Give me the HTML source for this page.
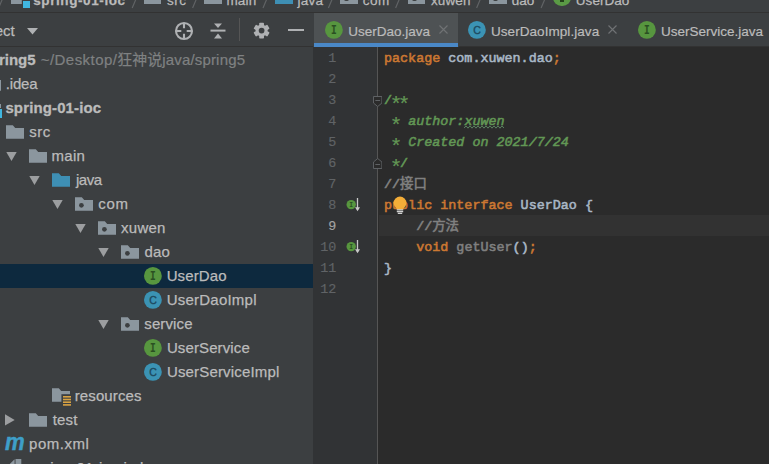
<!DOCTYPE html>
<html><head><meta charset="utf-8"><title>IDE</title>
<style>
html,body{margin:0;padding:0}
body{width:769px;height:464px;overflow:hidden;position:relative;background:#3c3f41;font-family:"Liberation Sans","Noto Sans CJK SC",sans-serif;color:#bbbbbb}
.ic{position:absolute;display:block}
#bc{position:absolute;left:0;top:0;width:769px;height:12px;overflow:hidden;background:#3c3f41}
#bcline{position:absolute;left:0;top:12px;width:769px;height:1px;background:#323232}
.btx{position:absolute;top:-8.2px;font-size:13.5px;line-height:18px;white-space:nowrap;color:#bbbbbb;-webkit-text-stroke:0.25px #bbbbbb}
.btx.b{font-weight:bold}
#left{position:absolute;left:0;top:13px;width:313px;height:451px;background:#3c3f41;overflow:hidden}
#tb{position:absolute;left:0;top:0;width:313px;height:33px}
#tbline{position:absolute;left:0;top:33px;width:313px;height:1px;background:#323232}
.row{position:absolute;left:0;width:313px;height:24px}
.row.sel{background:#0d293e}
.lb{position:absolute;top:0;font-size:15px;line-height:24px;white-space:nowrap;color:#bbbbbb;-webkit-text-stroke:0.25px #bbbbbb}
.lb.b{font-weight:bold;-webkit-text-stroke:0.3px #bbbbbb}
.lb.g{color:#7f8182;-webkit-text-stroke:0.2px #7f8182}
.lb.mvn{font-style:italic;font-weight:bold;font-size:24.6px;color:#3e9fc9;line-height:19px;-webkit-text-stroke:0.5px #3e9fc9;transform:scaleX(0.9);transform-origin:0 0}
#tree{position:absolute;left:0;top:-13px;width:313px;height:464px}
#tabs{position:absolute;left:313px;top:13px;width:456px;height:34px;background:#3c3f41}
.tab{position:absolute;top:0;height:34px}
.tab.act{background:#4e5254}
.tab .ul{position:absolute;left:0;right:0;bottom:0;height:4px;background:#4a88c7}
.tt{position:absolute;top:10.3px;font-size:13.5px;line-height:18px;white-space:nowrap;color:#bbbbbb;-webkit-text-stroke:0.2px #bbbbbb}
#ed{position:absolute;left:313px;top:47px;width:456px;height:417px;background:#2b2b2b}
#gut{position:absolute;left:313px;top:47px;width:65px;height:417px;background:#313335;border-right:1px solid #555555;box-sizing:border-box}
.ln,.cl{position:absolute;font-family:"Liberation Mono","Noto Sans CJK SC",monospace;font-size:13.4px;line-height:21px;height:21px;white-space:pre}
.ln{left:311.8px;width:24.5px;text-align:right;color:#606366;-webkit-text-stroke:0.15px #606366}
.ln.cur{color:#a4a3a3;-webkit-text-stroke:0.15px #a4a3a3}
.cl{left:384px;color:#a9b7c6;-webkit-text-stroke:0.55px}
.k{color:#cc7832} .d{color:#629755} .c{color:#808080} .u{color:#808080}
.as{display:inline-block;font-size:21px;line-height:10px;width:8.04px;text-indent:-2.3px;position:relative;top:6.8px;font-style:normal;-webkit-text-stroke:0.2px}
.cl i{font-style:italic}
.typo{}
#caret{position:absolute;left:379px;top:215px;width:390px;height:21px;background:#323232}
</style></head><body>
<div id="bc"><div class="ic" style="left:11px;top:-9px;width:12px;height:12.7px;background:#8b969e"></div><div class="ic" style="left:22.6px;top:0.6px;width:7.4px;height:7.4px;background:#40b6e0;box-shadow:0 0 0 1.2px #3c3f41"></div><span class="btx b" style="left:33.2px;letter-spacing:0.595px">spring-01-ioc</span><div class="ic" style="left:143.9px;top:-9px;width:17.6px;height:12.7px;background:#8b969e"></div><span class="btx " style="left:166.9px;letter-spacing:0.501px">src</span><div class="ic" style="left:204.3px;top:-9px;width:17.6px;height:12.7px;background:#8b969e"></div><span class="btx " style="left:226.4px;letter-spacing:0.184px">main</span><div class="ic" style="left:275px;top:-9px;width:17.6px;height:12.7px;background:#3e8fb4"></div><span class="btx " style="left:297.5px;letter-spacing:0.208px">java</span><div class="ic" style="left:340px;top:-9px;width:17.6px;height:12.7px;background:#8b969e"></div><div class="ic" style="left:344.2px;top:-3.4px;width:4.6px;height:4.6px;border-radius:50%;background:#3c3f41"></div><span class="btx " style="left:362.8px;letter-spacing:0.432px">com</span><div class="ic" style="left:407.9px;top:-9px;width:17.6px;height:12.7px;background:#8b969e"></div><div class="ic" style="left:412.09999999999997px;top:-3.4px;width:4.6px;height:4.6px;border-radius:50%;background:#3c3f41"></div><span class="btx " style="left:431px;letter-spacing:0.115px">xuwen</span><div class="ic" style="left:489px;top:-9px;width:17.6px;height:12.7px;background:#8b969e"></div><div class="ic" style="left:493.2px;top:-3.4px;width:4.6px;height:4.6px;border-radius:50%;background:#3c3f41"></div><span class="btx " style="left:511.8px;letter-spacing:0.025px">dao</span><div class="ic" style="left:552.9px;top:-11.5px;width:17.7px;height:17.7px;border-radius:50%;background:#5a9a45"></div><div class="ic" style="left:559.6px;top:0;width:4.2px;height:1.5px;background:#23401a"></div><span class="btx " style="left:575.8px;letter-spacing:0.047px">UserDao</span><svg class="ic" style="left:0;top:0" width="769" height="12" viewBox="0 0 769 12"><path d="M3.0 -2.4L-1.4 8 M136.6 -2.4L132.2 8 M197.0 -2.4L192.6 8 M267.4 -2.4L263.0 8 M332.8 -2.4L328.4 8 M400.0 -2.4L395.6 8 M481.0 -2.4L476.6 8 M545.5 -2.4L541.1 8" stroke="#606365" stroke-width="1.2" fill="none"/></svg></div><div id="bcline"></div>
<div id="left">
 <div id="tb">
  <span class="lb" style="left:-32px;top:6.4px">Project</span>
  <svg class="ic" style="left:26.6px;top:15.2px" width="11" height="7" viewBox="0 0 11 7"><path d="M0 0H11L5.5 6.6Z" fill="#afb1b3"/></svg>
  <svg class="ic" style="left:174px;top:7.6px" width="20" height="20" viewBox="0 0 20 20"><circle cx="10" cy="10" r="8" fill="none" stroke="#afb1b3" stroke-width="2.1"/><path d="M10 2V7.3M10 12.7V18M2 10H7.3M12.7 10H18" stroke="#afb1b3" stroke-width="2.1"/></svg>
  <svg class="ic" style="left:210px;top:8.5px" width="16" height="18" viewBox="0 0 16 18"><path d="M0.5 8.6H15.5" stroke="#afb1b3" stroke-width="2"/><path d="M4 1.5H12L8 6Z M4 16.5H12L8 11.5Z" fill="#afb1b3"/></svg>
  <div class="ic" style="left:239px;top:5px;width:1px;height:23px;background:#555555"></div>
  <svg class="ic" style="left:253.4px;top:8.6px" width="17.2" height="17.2" viewBox="-9 -9 18 18"><g fill="#afb1b3"><circle r="6.3"/><g id="t"><rect x="-2.5" y="-8.3" width="5" height="4" rx="0.8"/></g><use href="#t" transform="rotate(60)"/><use href="#t" transform="rotate(120)"/><use href="#t" transform="rotate(180)"/><use href="#t" transform="rotate(240)"/><use href="#t" transform="rotate(300)"/></g><circle r="3" fill="#3c3f41"/></svg>
  <div class="ic" style="left:288.2px;top:15.7px;width:15.7px;height:2.3px;background:#afb1b3"></div>
 </div>
 <div id="tbline"></div>
 <div id="tree"><div class="row" style="top:48px"><span class="lb b" style="left:-18.6px">spring5</span><span class="lb g" style="left:40.8px;letter-spacing:0.438px">~/Desktop/</span><span class="lb g" style="left:117.3px">狂神说</span><span class="lb g" style="left:162.2px;letter-spacing:0.176px">java/spring5</span></div><div class="row" style="top:72px"><svg class="ic" style="left:-17px;top:4.5px" width="18" height="14" viewBox="0 0 18 14"><path d="M0 0.3H6.8L9.2 2.9H18V13.8H0Z" fill="#8b969e"/></svg><span class="lb " style="left:5.8px;letter-spacing:-0.186px">.idea</span></div><div class="row" style="top:96px"><svg class="ic" style="left:-17px;top:4.5px" width="18" height="14" viewBox="0 0 18 14"><path d="M0 0.3H6.8L9.2 2.9H18V13.8H0Z" fill="#8b969e"/></svg><div class="ic" style="left:0;top:12.4px;width:1.9px;height:8.2px;background:#40b6e0;border-top:1.1px solid #3c3f41"></div><span class="lb b" style="left:5.4px;letter-spacing:0.132px">spring-01-ioc</span></div><div class="row" style="top:120px"><svg class="ic" style="left:5.8px;top:4.5px" width="18" height="14" viewBox="0 0 18 14"><path d="M0 0.3H6.8L9.2 2.9H18V13.8H0Z" fill="#8b969e"/></svg><span class="lb " style="left:29.2px;letter-spacing:0.535px">src</span></div><div class="row" style="top:144px"><svg class="ic" style="left:5.5px;top:8px" width="11" height="9" viewBox="0 0 11 9"><path d="M0.3 0H10.7L5.5 9Z" fill="#9c9ea0"/></svg><svg class="ic" style="left:29px;top:4.5px" width="18" height="14" viewBox="0 0 18 14"><path d="M0 0.3H6.8L9.2 2.9H18V13.8H0Z" fill="#8b969e"/></svg><span class="lb " style="left:51.6px;letter-spacing:0.222px">main</span></div><div class="row" style="top:168px"><svg class="ic" style="left:28.5px;top:8px" width="11" height="9" viewBox="0 0 11 9"><path d="M0.3 0H10.7L5.5 9Z" fill="#9c9ea0"/></svg><svg class="ic" style="left:52px;top:4.5px" width="18" height="14" viewBox="0 0 18 14"><path d="M0 0.3H6.8L9.2 2.9H18V13.8H0Z" fill="#3e8fb4"/></svg><span class="lb " style="left:76.0px;letter-spacing:-0.479px">java</span></div><div class="row" style="top:192px"><svg class="ic" style="left:51.5px;top:8px" width="11" height="9" viewBox="0 0 11 9"><path d="M0.3 0H10.7L5.5 9Z" fill="#9c9ea0"/></svg><svg class="ic" style="left:75px;top:4.5px" width="18" height="14" viewBox="0 0 18 14"><path d="M0 0.3H6.8L9.2 2.9H18V13.8H0Z" fill="#8b969e"/><circle cx="6.4" cy="8.3" r="2.35" fill="#3c3f41"/></svg><span class="lb " style="left:98.3px;letter-spacing:0.654px">com</span></div><div class="row" style="top:216px"><svg class="ic" style="left:74.5px;top:8px" width="11" height="9" viewBox="0 0 11 9"><path d="M0.3 0H10.7L5.5 9Z" fill="#9c9ea0"/></svg><svg class="ic" style="left:98px;top:4.5px" width="18" height="14" viewBox="0 0 18 14"><path d="M0 0.3H6.8L9.2 2.9H18V13.8H0Z" fill="#8b969e"/><circle cx="6.4" cy="8.3" r="2.35" fill="#3c3f41"/></svg><span class="lb " style="left:121.1px;letter-spacing:0.220px">xuwen</span></div><div class="row" style="top:240px"><svg class="ic" style="left:97.5px;top:8px" width="11" height="9" viewBox="0 0 11 9"><path d="M0.3 0H10.7L5.5 9Z" fill="#9c9ea0"/></svg><svg class="ic" style="left:121px;top:4.5px" width="18" height="14" viewBox="0 0 18 14"><path d="M0 0.3H6.8L9.2 2.9H18V13.8H0Z" fill="#8b969e"/><circle cx="6.4" cy="8.3" r="2.35" fill="#3c3f41"/></svg><span class="lb " style="left:144.4px;letter-spacing:0.200px">dao</span></div><div class="row sel" style="top:264px"><svg class="ic" style="left:144px;top:3.1px" width="17.8" height="17.8" viewBox="0 0 17.8 17.8"><circle cx="8.9" cy="8.9" r="8.9" fill="#57963f"/><text transform="translate(8.90 12.80) scale(1.0 1.24)" font-family="Liberation Mono, monospace" font-weight="bold" font-size="9.6" text-anchor="middle" fill="#2a4f22">I</text></svg><span class="lb " style="left:166.7px;letter-spacing:0.102px">UserDao</span></div><div class="row" style="top:288px"><svg class="ic" style="left:144px;top:3.1px" width="17.8" height="17.8" viewBox="0 0 17.8 17.8"><circle cx="8.9" cy="8.9" r="8.9" fill="#3b93b4"/><text x="9.00" y="12.90" font-family="Liberation Sans, sans-serif" font-size="10.6" text-anchor="middle" fill="#1d4a5f" stroke="#1d4a5f" stroke-width="0.35">C</text></svg><span class="lb " style="left:166.7px;letter-spacing:0.225px">UserDaoImpl</span></div><div class="row" style="top:312px"><svg class="ic" style="left:97.5px;top:8px" width="11" height="9" viewBox="0 0 11 9"><path d="M0.3 0H10.7L5.5 9Z" fill="#9c9ea0"/></svg><svg class="ic" style="left:121px;top:4.5px" width="18" height="14" viewBox="0 0 18 14"><path d="M0 0.3H6.8L9.2 2.9H18V13.8H0Z" fill="#8b969e"/><circle cx="6.4" cy="8.3" r="2.35" fill="#3c3f41"/></svg><span class="lb " style="left:144.3px;letter-spacing:0.114px">service</span></div><div class="row" style="top:336px"><svg class="ic" style="left:144px;top:3.1px" width="17.8" height="17.8" viewBox="0 0 17.8 17.8"><circle cx="8.9" cy="8.9" r="8.9" fill="#57963f"/><text transform="translate(8.90 12.80) scale(1.0 1.24)" font-family="Liberation Mono, monospace" font-weight="bold" font-size="9.6" text-anchor="middle" fill="#2a4f22">I</text></svg><span class="lb " style="left:166.9px;letter-spacing:0.119px">UserService</span></div><div class="row" style="top:360px"><svg class="ic" style="left:144px;top:3.1px" width="17.8" height="17.8" viewBox="0 0 17.8 17.8"><circle cx="8.9" cy="8.9" r="8.9" fill="#3b93b4"/><text x="9.00" y="12.90" font-family="Liberation Sans, sans-serif" font-size="10.6" text-anchor="middle" fill="#1d4a5f" stroke="#1d4a5f" stroke-width="0.35">C</text></svg><span class="lb " style="left:166.9px;letter-spacing:0.165px">UserServiceImpl</span></div><div class="row" style="top:384px"><svg class="ic" style="left:52px;top:4.1px" width="20" height="19" viewBox="0 0 20 19"><path d="M0 0.3H6.8L9.2 2.9H18V13.8H0Z" fill="#8b969e"/><rect x="9.4" y="6.2" width="10" height="12" fill="#3c3f41"/><g fill="#d9a343"><rect x="11" y="8" width="8" height="1.6"/><rect x="11" y="10.7" width="8" height="1.6"/><rect x="11" y="13.4" width="8" height="1.6"/><rect x="11" y="16.1" width="8" height="1.6"/></g></svg><span class="lb " style="left:74.7px;letter-spacing:0.122px">resources</span></div><div class="row" style="top:408px"><svg class="ic" style="left:5px;top:6.3px" width="10" height="12" viewBox="0 0 10 12"><path d="M0 0.3L9.7 5.9L0 11.5Z" fill="#9c9ea0"/></svg><svg class="ic" style="left:29px;top:4.5px" width="18" height="14" viewBox="0 0 18 14"><path d="M0 0.3H6.8L9.2 2.9H18V13.8H0Z" fill="#8b969e"/></svg><span class="lb " style="left:52.8px;letter-spacing:0.150px">test</span></div><div class="row" style="top:432px"><span class="lb mvn" style="left:5.2px">m</span><span class="lb " style="left:29.0px;letter-spacing:0.546px">pom.xml</span></div><div class="row" style="top:456px"><svg class="ic" style="left:9px;top:3px" width="13" height="16" viewBox="0 0 13 16"><path d="M0.2 5.6L5.6 0.2V5.6Z M6.5 0H12.3V16H6.5Z M0.2 6.6H5.6V16H0.2Z" fill="#8b969e"/></svg><span class="lb " style="left:28.6px;letter-spacing:0.292px">spring-01-ioc.iml</span></div></div>
</div>
<div id="tabs">
 <div class="tab act" style="left:1px;width:144px"><svg class="ic" style="left:11.0px;top:8.2px" width="17.8" height="17.8" viewBox="0 0 17.8 17.8"><circle cx="8.9" cy="8.9" r="8.9" fill="#57963f"/><text transform="translate(8.90 12.80) scale(1.0 1.24)" font-family="Liberation Mono, monospace" font-weight="bold" font-size="9.6" text-anchor="middle" fill="#2a4f22">I</text></svg><span class="tt" style="left:34.3px">UserDao.java</span>
  <svg class="ic" style="left:125px;top:12px" width="9" height="9" viewBox="0 0 9 9"><path d="M0.5 0.5L8.5 8.5M8.5 0.5L0.5 8.5" stroke="#707375" stroke-width="1.1"/></svg><div class="ul"></div></div>
 <div class="tab" style="left:146px;width:172px"><svg class="ic" style="left:9.3px;top:8.2px" width="17.8" height="17.8" viewBox="0 0 17.8 17.8"><circle cx="8.9" cy="8.9" r="8.9" fill="#3b93b4"/><text x="9.00" y="12.90" font-family="Liberation Sans, sans-serif" font-size="10.6" text-anchor="middle" fill="#1d4a5f" stroke="#1d4a5f" stroke-width="0.35">C</text></svg><span class="tt" style="left:32px;letter-spacing:0.06px">UserDaoImpl.java</span>
  <svg class="ic" style="left:149.4px;top:12px" width="9" height="9" viewBox="0 0 9 9"><path d="M0.5 0.5L8.5 8.5M8.5 0.5L0.5 8.5" stroke="#707375" stroke-width="1.1"/></svg></div>
 <div class="tab" style="left:318px;width:138px"><svg class="ic" style="left:7.2px;top:8.2px" width="17.8" height="17.8" viewBox="0 0 17.8 17.8"><circle cx="8.9" cy="8.9" r="8.9" fill="#57963f"/><text transform="translate(8.90 12.80) scale(1.0 1.24)" font-family="Liberation Mono, monospace" font-weight="bold" font-size="9.6" text-anchor="middle" fill="#2a4f22">I</text></svg><span class="tt" style="left:30px">UserService.java</span></div>
</div>
<div class="ic" style="left:459px;top:46px;width:310px;height:1px;background:#323232"></div>
<div id="ed"></div>
<div id="caret"></div>
<div id="gut"></div>
<div class="ln" style="top:47.5px">1</div><div class="cl" style="top:47.8px"><span class="k">package</span> com.xuwen.dao<span class="k">;</span></div><div class="ln" style="top:68.5px">2</div><div class="cl" style="top:68.8px"></div><div class="ln" style="top:89.5px">3</div><div class="cl" style="top:89.8px"><span class="d">/<span class="as">*</span><span class="as">*</span></span></div><div class="ln" style="top:110.5px">4</div><div class="cl" style="top:110.8px"><span class="d"> <span class="as">*</span> <i>author:<span class="typo">xuwen</span></i></span></div><div class="ln" style="top:131.5px">5</div><div class="cl" style="top:131.8px"><span class="d"> <span class="as">*</span> <i>Created on 2021/7/24</i></span></div><div class="ln" style="top:152.5px">6</div><div class="cl" style="top:152.8px"><span class="d"> <span class="as">*</span>/</span></div><div class="ln" style="top:173.5px">7</div><div class="cl" style="top:173.8px"><span class="c">//接口</span></div><div class="ln" style="top:194.5px">8</div><div class="cl" style="top:194.8px"><span class="k">public interface</span> UserDao {</div><div class="ln cur" style="top:215.5px">9</div><div class="cl" style="top:215.8px">    <span class="c">//方法</span></div><div class="ln" style="top:236.5px">10</div><div class="cl" style="top:236.8px">    <span class="k">void</span> <span class="u">getUser</span>()<span class="k">;</span></div><div class="ln" style="top:257.5px">11</div><div class="cl" style="top:257.8px">}</div><div class="ln" style="top:278.5px">12</div><div class="cl" style="top:278.8px"></div>
<svg class="ic" style="left:346px;top:198px" width="16" height="14" viewBox="0 0 16 14"><circle cx="5.2" cy="6.6" r="4.7" fill="#57963f"/><text x="5.2" y="8.8" font-family="Liberation Mono, monospace" font-weight="bold" font-size="6.4" text-anchor="middle" fill="#2a4f22">I</text><path d="M11.5 0V12" stroke="#c8c8c8" stroke-width="1.3" fill="none"/><path d="M9 9.2H14L11.5 13.2Z" fill="#c8c8c8"/></svg><svg class="ic" style="left:346px;top:240px" width="16" height="14" viewBox="0 0 16 14"><circle cx="5.2" cy="6.6" r="4.7" fill="#57963f"/><text x="5.2" y="8.8" font-family="Liberation Mono, monospace" font-weight="bold" font-size="6.4" text-anchor="middle" fill="#2a4f22">I</text><path d="M11.5 0V12" stroke="#c8c8c8" stroke-width="1.3" fill="none"/><path d="M9 9.2H14L11.5 13.2Z" fill="#c8c8c8"/></svg>
<svg class="ic" style="left:372.9px;top:95.5px" width="9.4" height="11" viewBox="0 0 10 11" preserveAspectRatio="none"><path d="M0.5 0.5H9.5V7L5 10.5L0.5 7Z" fill="#2b2b2b" stroke="#606366"/><path d="M2.5 4.5H7.5" stroke="#606366"/></svg><svg class="ic" style="left:372.9px;top:157.5px" width="9.4" height="11" viewBox="0 0 10 11" preserveAspectRatio="none"><path d="M0.5 10.5H9.5V4L5 0.5L0.5 4Z" fill="#2b2b2b" stroke="#606366"/><path d="M2.5 6.5H7.5" stroke="#606366"/></svg>
<svg class="ic" style="left:464px;top:125px" width="40" height="4" viewBox="0 0 40 4"><path d="M0 3.2L2 0.8L4 3.2L6 0.8L8 3.2L10 0.8L12 3.2L14 0.8L16 3.2L18 0.8L20 3.2L22 0.8L24 3.2L26 0.8L28 3.2L30 0.8L32 3.2L34 0.8L36 3.2L38 0.8L40 3.2" stroke="#628c66" stroke-width="0.9" fill="none"/></svg>
<svg class="ic" style="left:393px;top:196px" width="14" height="19" viewBox="0 0 14 19"><circle cx="7" cy="7" r="6.4" fill="#f3ad38"/><path d="M3.6 11H10.4V13.6H3.6Z" fill="#f3ad38"/><path d="M3.8 13.9H10.2M3.8 15.6H10.2M4.8 17.3H9.2" stroke="#d0d0d0" stroke-width="1.2"/></svg>
</body></html>
